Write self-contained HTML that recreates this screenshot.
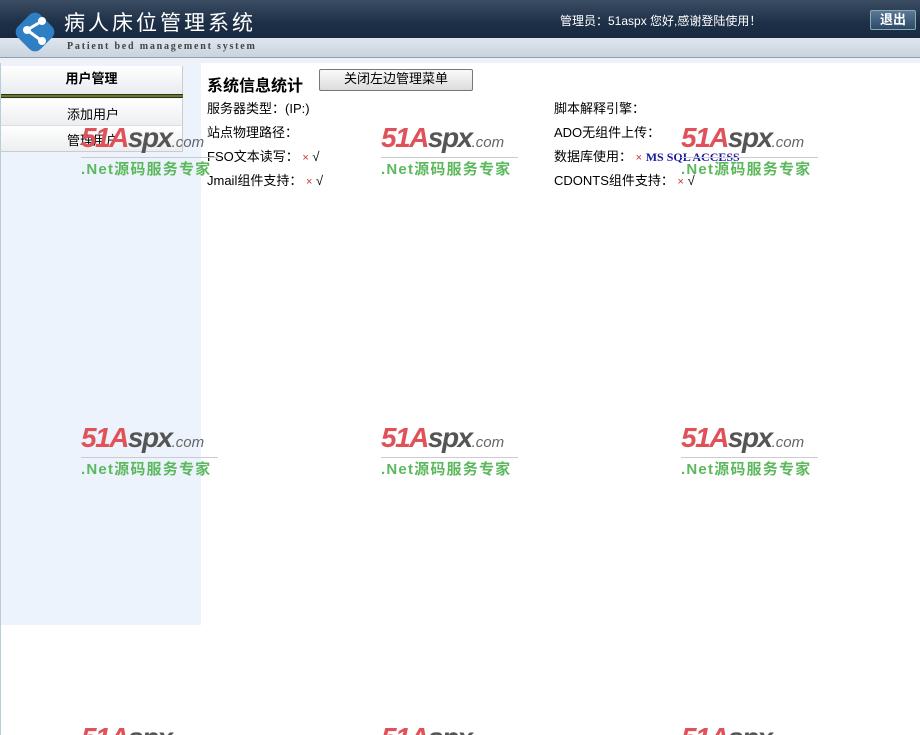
<!DOCTYPE html>
<html><head><meta charset="utf-8"><style>
html,body{margin:0;width:920px;height:735px;overflow:hidden}
body{background:#fff;font-family:"Liberation Sans","Noto Sans CJK SC",sans-serif;position:relative;font-size:12px}
.top{position:absolute;left:0;top:0;width:920px;height:38px;background:linear-gradient(#3a4d63,#1e3047 60%,#172a40)}
.sub{position:absolute;left:0;top:38px;width:920px;height:19px;background:linear-gradient(#dfe6ee,#c9d3de);border-bottom:1px solid #8fa1b5}
.strip{position:absolute;left:0;top:58px;width:920px;height:5px;background:#eef2f7}
.side{position:absolute;left:0;top:63px;width:200px;height:562px;background:#edf3fd;border-left:1px solid #b9ccd8}
.abs{position:absolute;white-space:nowrap}
.t{font-size:13px;color:#000}
.wm{position:absolute;width:140px;height:60px}
.wm .a{position:absolute;left:0;top:-5px;font:italic 900 28px "Liberation Sans",sans-serif;color:#e0525a;letter-spacing:-1.5px}
.wm .a span{color:#555}
.wm .a small{font-size:15px;font-weight:normal;color:#666;letter-spacing:0}
.wm .l{position:absolute;left:0;top:30px;width:137px;border-top:1px solid #ccc}
.wm .n{position:absolute;left:0;top:31px;font:bold 15px "Liberation Sans","Noto Sans CJK SC",sans-serif;color:#5cb85c;letter-spacing:1.2px}
.bot{position:absolute;top:722px;height:13px;width:140px;overflow:hidden}
.bot .a{position:absolute;left:0;top:0;font:italic 900 28px "Liberation Sans",sans-serif;color:#e0525a;letter-spacing:-1.5px}
.bot .a span{color:#555}
</style></head><body>
<div class="top"></div><div class="sub"></div><div class="strip"></div>
<svg class="abs" style="left:12px;top:10px" width="46" height="44" viewBox="0 0 46 44"><rect x="7" y="6" width="32" height="32" rx="8" transform="rotate(45 23 22)" fill="#2f7fc4"/><circle cx="15" cy="20" r="4" fill="#fff"/><circle cx="30" cy="11" r="4" fill="#fff"/><circle cx="30" cy="31" r="4" fill="#fff"/><path d="M15 20L30 11M15 20L30 31" stroke="#fff" stroke-width="3"/></svg>
<div class="abs" style="left:64px;top:7px;font-size:21px;color:#fff;letter-spacing:3px">病人床位管理系统</div>
<div class="abs" style="left:67px;top:41px;font:bold 10px 'Liberation Serif',serif;color:#444;letter-spacing:1.8px">Patient bed management system</div>
<div class="abs" style="left:560px;top:12px;font-size:12px;color:#fff">管理员：51aspx 您好,感谢登陆使用！</div>
<div class="abs" style="left:870px;top:10px;width:44px;height:18px;background:linear-gradient(#5a7896,#2b4968);border:1px solid #8aa;border-radius:2px;color:#fff;font-weight:bold;font-size:13px;text-align:center;line-height:18px">退出</div>
<div class="side"></div>
<div class="abs" style="left:1px;top:66px;width:181px;height:28px;background:linear-gradient(#fff,#e8ebef);border-right:1px solid #ccc;text-align:center;line-height:26px;font-weight:bold;font-size:13px">用户管理</div>
<div class="abs" style="left:1px;top:94px;width:182px;height:4px;background:linear-gradient(#111,#8a9a30,#111)"></div>
<div class="abs" style="left:1px;top:99px;width:181px;height:26px;background:linear-gradient(#fff,#eceef0);border-right:1px solid #ccc;border-bottom:1px solid #ddd"></div>
<div class="abs" style="left:1px;top:126px;width:181px;height:25px;background:linear-gradient(#fff,#eceef0);border-right:1px solid #ccc;border-bottom:1px solid #ccc"></div>
<div class="abs t" style="left:67px;top:104px">添加用户</div>
<div class="abs t" style="left:67px;top:130px">管理用户</div>
<div class="abs" style="left:207px;top:72px;font-size:16px;font-weight:bold">系统信息统计</div>
<div class="abs" style="left:319px;top:69px;width:152px;height:20px;background:linear-gradient(#fafafa,#dcdcdc);border:1px solid #777;border-radius:2px;text-align:center;font-size:13px;line-height:17px">关闭左边管理菜单</div>
<div class="abs t" style="left:207px;top:98px">服务器类型：(IP:)</div>
<div class="abs t" style="left:207px;top:122px">站点物理路径：</div>
<div class="abs t" style="left:207px;top:146px">FSO文本读写： <span style="color:#c33;font-size:11px">×</span> √</div>
<div class="abs t" style="left:207px;top:170px">Jmail组件支持： <span style="color:#c33;font-size:11px">×</span> √</div>
<div class="abs t" style="left:554px;top:98px">脚本解释引擎：</div>
<div class="abs t" style="left:554px;top:122px">ADO无组件上传：</div>
<div class="abs t" style="left:554px;top:146px">数据库使用： <span style="color:#c33;font-size:11px">×</span> <b style="color:#1a1aa0;font-family:'Liberation Serif',serif;font-size:12px">MS SQL ACCESS</b></div>
<div class="abs t" style="left:554px;top:170px">CDONTS组件支持： <span style="color:#c33;font-size:11px">×</span> √</div>
<div class="wm" style="left:81px;top:127px"><div class="a">51A<span>spx</span><small>.com</small></div><div class="l"></div><div class="n">.Net源码服务专家</div></div>
<div class="wm" style="left:381px;top:127px"><div class="a">51A<span>spx</span><small>.com</small></div><div class="l"></div><div class="n">.Net源码服务专家</div></div>
<div class="wm" style="left:681px;top:127px"><div class="a">51A<span>spx</span><small>.com</small></div><div class="l"></div><div class="n">.Net源码服务专家</div></div>
<div class="wm" style="left:81px;top:427px"><div class="a">51A<span>spx</span><small>.com</small></div><div class="l"></div><div class="n">.Net源码服务专家</div></div>
<div class="wm" style="left:381px;top:427px"><div class="a">51A<span>spx</span><small>.com</small></div><div class="l"></div><div class="n">.Net源码服务专家</div></div>
<div class="wm" style="left:681px;top:427px"><div class="a">51A<span>spx</span><small>.com</small></div><div class="l"></div><div class="n">.Net源码服务专家</div></div>
<div class="bot" style="left:81px"><div class="a">51A<span>spx</span></div></div>
<div class="bot" style="left:381px"><div class="a">51A<span>spx</span></div></div>
<div class="bot" style="left:681px"><div class="a">51A<span>spx</span></div></div>
<div class="abs" style="left:0;top:625px;width:1px;height:110px;background:#b9ccd8"></div>
</body></html>
